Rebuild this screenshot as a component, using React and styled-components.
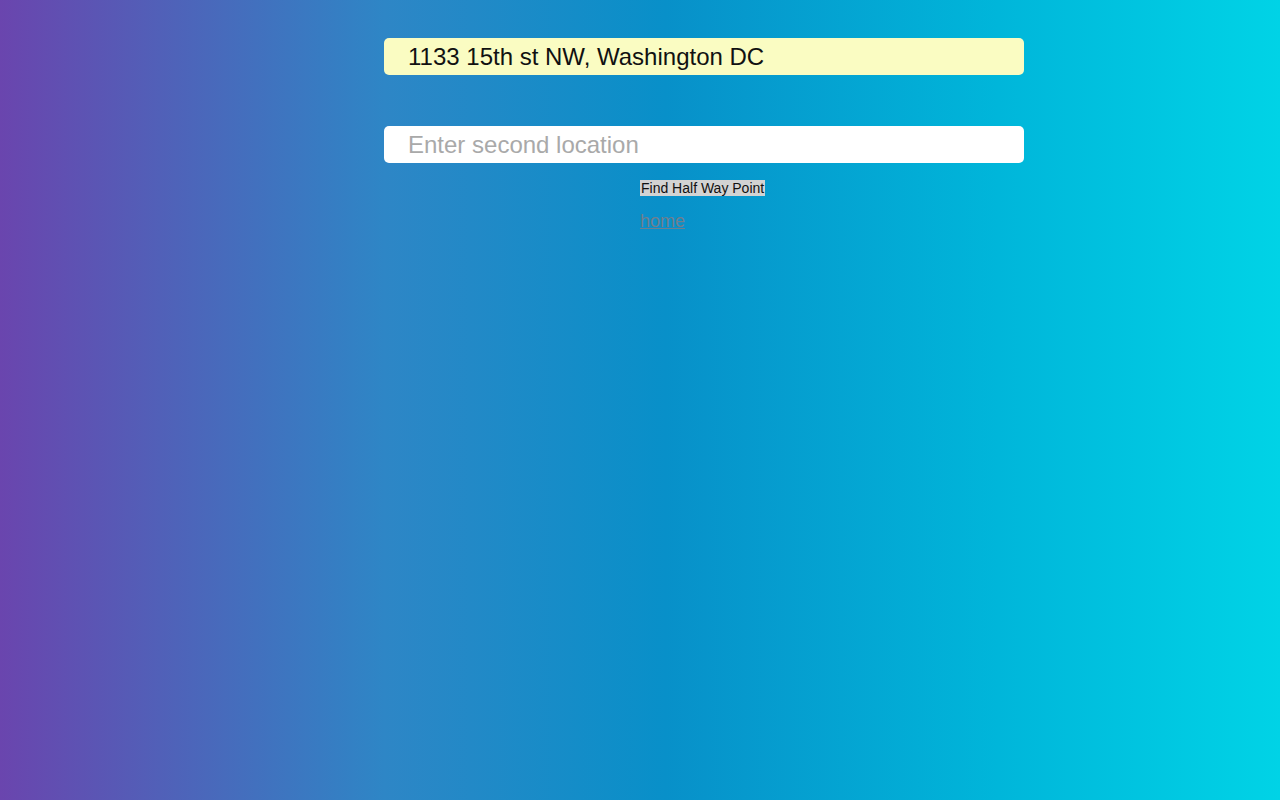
import React from "react";
import styled, { createGlobalStyle } from "styled-components";

const GlobalStyle = createGlobalStyle`
  html, body { margin: 0; padding: 0; height: 100%; }
  body {
    min-height: 800px;
    background: linear-gradient(to right, #6a45ae 0%, #2e86c6 30%, #0890c9 52%, #00b6da 78%, #00d3e6 100%);
    font-family: "Liberation Sans", Arial, sans-serif;
  }
`;

const Page = styled.main`
  display: flex;
  justify-content: center;
  padding-top: 38px;
  padding-left: 128px;
`;

const Form = styled.form`
  width: 640px;
  display: flex;
  flex-direction: column;
`;

const Field = styled.input`
  box-sizing: border-box;
  width: 640px;
  height: 37px;
  border: none;
  border-radius: 5px;
  padding: 0 24px;
  margin-bottom: ${(p) => p.$gap || 0}px;
  font-family: "Liberation Sans", Arial, sans-serif;
  font-size: 24px;
  color: #111;
  background: ${(p) => (p.$filled ? "#fafcc2" : "#ffffff")};
  outline: none;
  &::placeholder { color: #a9a9a9; }
`;

const Actions = styled.div`
  display: flex;
  flex-direction: column;
  align-items: flex-start;
  padding-left: 256px;
  margin-top: 17px;
  gap: 15px;
`;

const Button = styled.button`
  border: none;
  background: #d3d3d3;
  padding: 1px 1px;
  font-family: "Liberation Sans", Arial, sans-serif;
  font-size: 14px;
  color: #111;
  line-height: 14px;
  cursor: pointer;
`;

const HomeLink = styled.a`
  font-family: "Liberation Sans", Arial, sans-serif;
  font-size: 18px;
  color: #6f7f8f;
  text-decoration: underline;
`;

export default function App() {
  return (
    <>
      <GlobalStyle />
      <Page>
        <Form onSubmit={(e) => e.preventDefault()}>
          <Field $filled $gap={51} defaultValue="1133 15th st NW, Washington DC" />
          <Field placeholder="Enter second location" />
          <Actions>
            <Button type="submit">Find Half Way Point</Button>
            <HomeLink href="#">home</HomeLink>
          </Actions>
        </Form>
      </Page>
    </>
  );
}
